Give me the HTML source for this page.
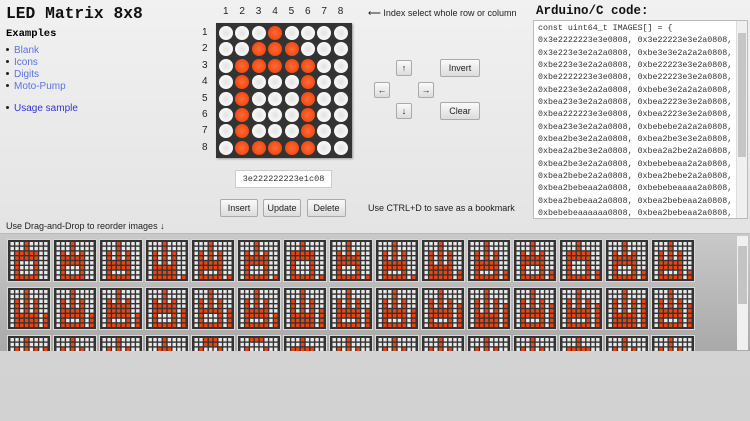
<!DOCTYPE html><html><head><meta charset="utf-8"><style>
*{box-sizing:border-box}
body{margin:0;width:750px;height:421px;overflow:hidden;background:linear-gradient(#f1f1f1 0,#e4e4e4 230px,#d3d3d3 350px,#d2d2d2);font-family:"Liberation Sans",Arial,sans-serif;position:relative}
.a{position:absolute}
h1{position:absolute;left:6px;top:4px;margin:0;font:bold 16.3px "Liberation Mono",monospace;color:#111}
.ex{left:6px;top:28px;font:bold 10.5px "Liberation Mono",monospace}
ul{position:absolute;margin:0;padding:0;list-style:none;left:5px;font-size:10px;line-height:12px}
ul li:before{content:"";display:inline-block;width:3px;height:3px;background:#222;border-radius:50%;margin:0 5px 2px 1px}
ul a{color:#5a72e6;text-decoration:none}
.s{font-size:9px;color:#222}
.btn{position:absolute;border:1px solid #aaa;background:linear-gradient(#fafafa,#dcdcdc);font-size:9px;text-align:center;color:#222;border-radius:2px}
.mat{left:216px;top:23px;width:136px;height:135px;background:#333;box-shadow:1px 1px 2px #999}
.led{position:absolute;width:14px;height:14px;border-radius:50%;background:radial-gradient(circle at 50% 50%,#e2e2e2,#f6f6f6 60%,#fff)}
.on{background:radial-gradient(circle at 50% 50%,#ff6a3a,#f24a10 70%,#e8400a)}
.ta{left:533px;top:20px;width:215px;height:199px;background:#fff;border:1px solid #bbb;overflow:hidden}
.code{position:absolute;left:4px;top:2px;font:8.3px/12.35px "Liberation Mono",monospace;color:#333;white-space:pre}
.sb{position:absolute;right:0;top:0;width:11px;height:100%;background:#f0f0f0;border-left:1px solid #ddd}
.th{position:absolute;width:44px;height:43px;background:#d8d8d8;padding:1px}
.th svg{display:block}
</style></head><body>
<h1>LED Matrix 8x8</h1>
<div class="a ex">Examples</div>
<ul style="top:45px"><li><a>Blank</a></li><li><a>Icons</a></li><li><a>Digits</a></li><li><a>Moto-Pump</a></li></ul>
<ul style="top:103px"><li><a style="color:#3434d8">Usage sample</a></li></ul>
<div id="nums"></div>
<div class="a mat" id="mat"></div>
<div class="a s" style="left:368px;top:8px">⟵ Index select whole row or column</div>
<div class="btn" style="left:396px;top:60px;width:16px;height:16px;line-height:14px">↑</div>
<div class="btn" style="left:440px;top:59px;width:40px;height:18px;line-height:16px">Invert</div>
<div class="btn" style="left:374px;top:82px;width:16px;height:16px;line-height:14px">←</div>
<div class="btn" style="left:418px;top:82px;width:16px;height:16px;line-height:14px">→</div>
<div class="btn" style="left:396px;top:103px;width:16px;height:16px;line-height:14px">↓</div>
<div class="btn" style="left:440px;top:102px;width:40px;height:18px;line-height:16px">Clear</div>
<div class="a" style="left:235px;top:170px;width:97px;height:18px;background:#fff;border:1px solid #ccc;font:8.5px/16px 'Liberation Mono',monospace;text-align:center;color:#333">3e222222223e1c08</div>
<div class="btn" style="left:220px;top:199px;width:38px;height:18px;line-height:16px">Insert</div>
<div class="btn" style="left:263px;top:199px;width:38px;height:18px;line-height:16px">Update</div>
<div class="btn" style="left:307px;top:199px;width:39px;height:18px;line-height:16px">Delete</div>
<div class="a s" style="left:368px;top:203px">Use CTRL+D to save as a bookmark</div>
<div class="a" style="left:536px;top:4px;font:bold 12.5px 'Liberation Mono',monospace;color:#111">Arduino/C code:</div>
<div class="a ta"><div class="code" id="code"></div><div class="sb"><div style="position:absolute;left:1px;top:12px;width:8px;height:124px;background:#c6c6c6"></div></div></div>
<div class="a s" style="left:6px;top:221px">Use Drag-and-Drop to reorder images ↓</div>
<div class="a" id="tray" style="left:0;top:233px;width:750px;height:118px;background:linear-gradient(#c9c9c9,#a9a9a9);border-top:1px solid #bbb;overflow:hidden">
<div style="position:absolute;right:2px;top:2px;width:11px;height:114px;background:#f0f0f0"><div style="position:absolute;left:1px;top:10px;width:9px;height:58px;background:#c4c4c4"></div></div>
</div>
<script>
var codes=["3e2222223e3e0808","3e22223e3e2a0808","3e223e3e2a2a0808","be3e3e2a2a2a0808","be223e3e2a2a0808","be22223e3e2a0808","be2222223e3e0808","be22223e3e2a0808","be223e3e2a2a0808","bebe3e2a2a2a0808","bea23e3e2a2a0808","bea2223e3e2a0808","bea222223e3e0808","bea2223e3e2a0808","bea23e3e2a2a0808","bebebe2a2a2a0808","bea2be3e2a2a0808","bea2be3e3e2a0808","bea2a2be3e2a0808","bea2a2be2a2a0808","bea2be3e2a2a0808","bebebeaa2a2a0808","bea2bebe2a2a0808","bea2bebe2a2a0808","bea2bebeaa2a0808","bebebeaaaa2a0808","bea2bebeaa2a0808","bea2bebeaa2a0808","bebebeaaaaaa0808","bea2bebeaa2a0808","bebebeaaaaaa0808","bea2bebeaa2a0808","bea2a2bebe2a0808","bea2a2a2be1c0808","bea2a2a2a2221c1c","bea2a2a2a222001c"];
var t="const uint64_t IMAGES[] = {\n";
for(var i=0;i<32;i+=2)t+="0x"+codes[i]+", 0x"+codes[i+1]+",\n";
document.getElementById('code').textContent=t;
function bits(h){var r=[];for(var k=0;k<8;k++){r.push(parseInt(h.substr(14-2*k,2),16));}return r;}
var m=document.getElementById('mat'),mb=bits("3e222222223e1c08"),s="";
for(var y=0;y<8;y++)for(var x=0;x<8;x++){s+='<div class="led'+((mb[y]>>x)&1?' on':'')+'" style="left:'+(3+x*16.4)+'px;top:'+(3+y*16.4)+'px"></div>';}
m.innerHTML=s;
var n="";for(var k=0;k<8;k++){n+='<div class="a s" style="font-size:10px;left:'+(223+k*16.4)+'px;top:6px">'+(k+1)+'</div><div class="a s" style="font-size:10px;left:202px;top:'+(27+k*16.4)+'px">'+(k+1)+'</div>';}
document.getElementById('nums').innerHTML=n;
var tr=document.getElementById('tray'),h="";
for(var j=0;j<45;j++){var r=Math.floor(j/15),c=j%15,b=bits(codes[j%codes.length]);
var sv='<svg width="42" height="41"><rect width="42" height="41" fill="#333"/>';
for(var y=0;y<8;y++)for(var x=0;x<8;x++)sv+='<rect x="'+(2.5+x*4.8)+'" y="'+(2+y*4.8)+'" width="3.4" height="3.4" fill="'+(((b[y]>>x)&1)?'#f04410':'#e8e8e8')+'"/>';
sv+='</svg>';
h+='<div class="th" style="left:'+(7+c*46)+'px;top:'+(5+r*48)+'px">'+sv+'</div>';}
tr.insertAdjacentHTML('afterbegin',h);
</script>
</body></html>
